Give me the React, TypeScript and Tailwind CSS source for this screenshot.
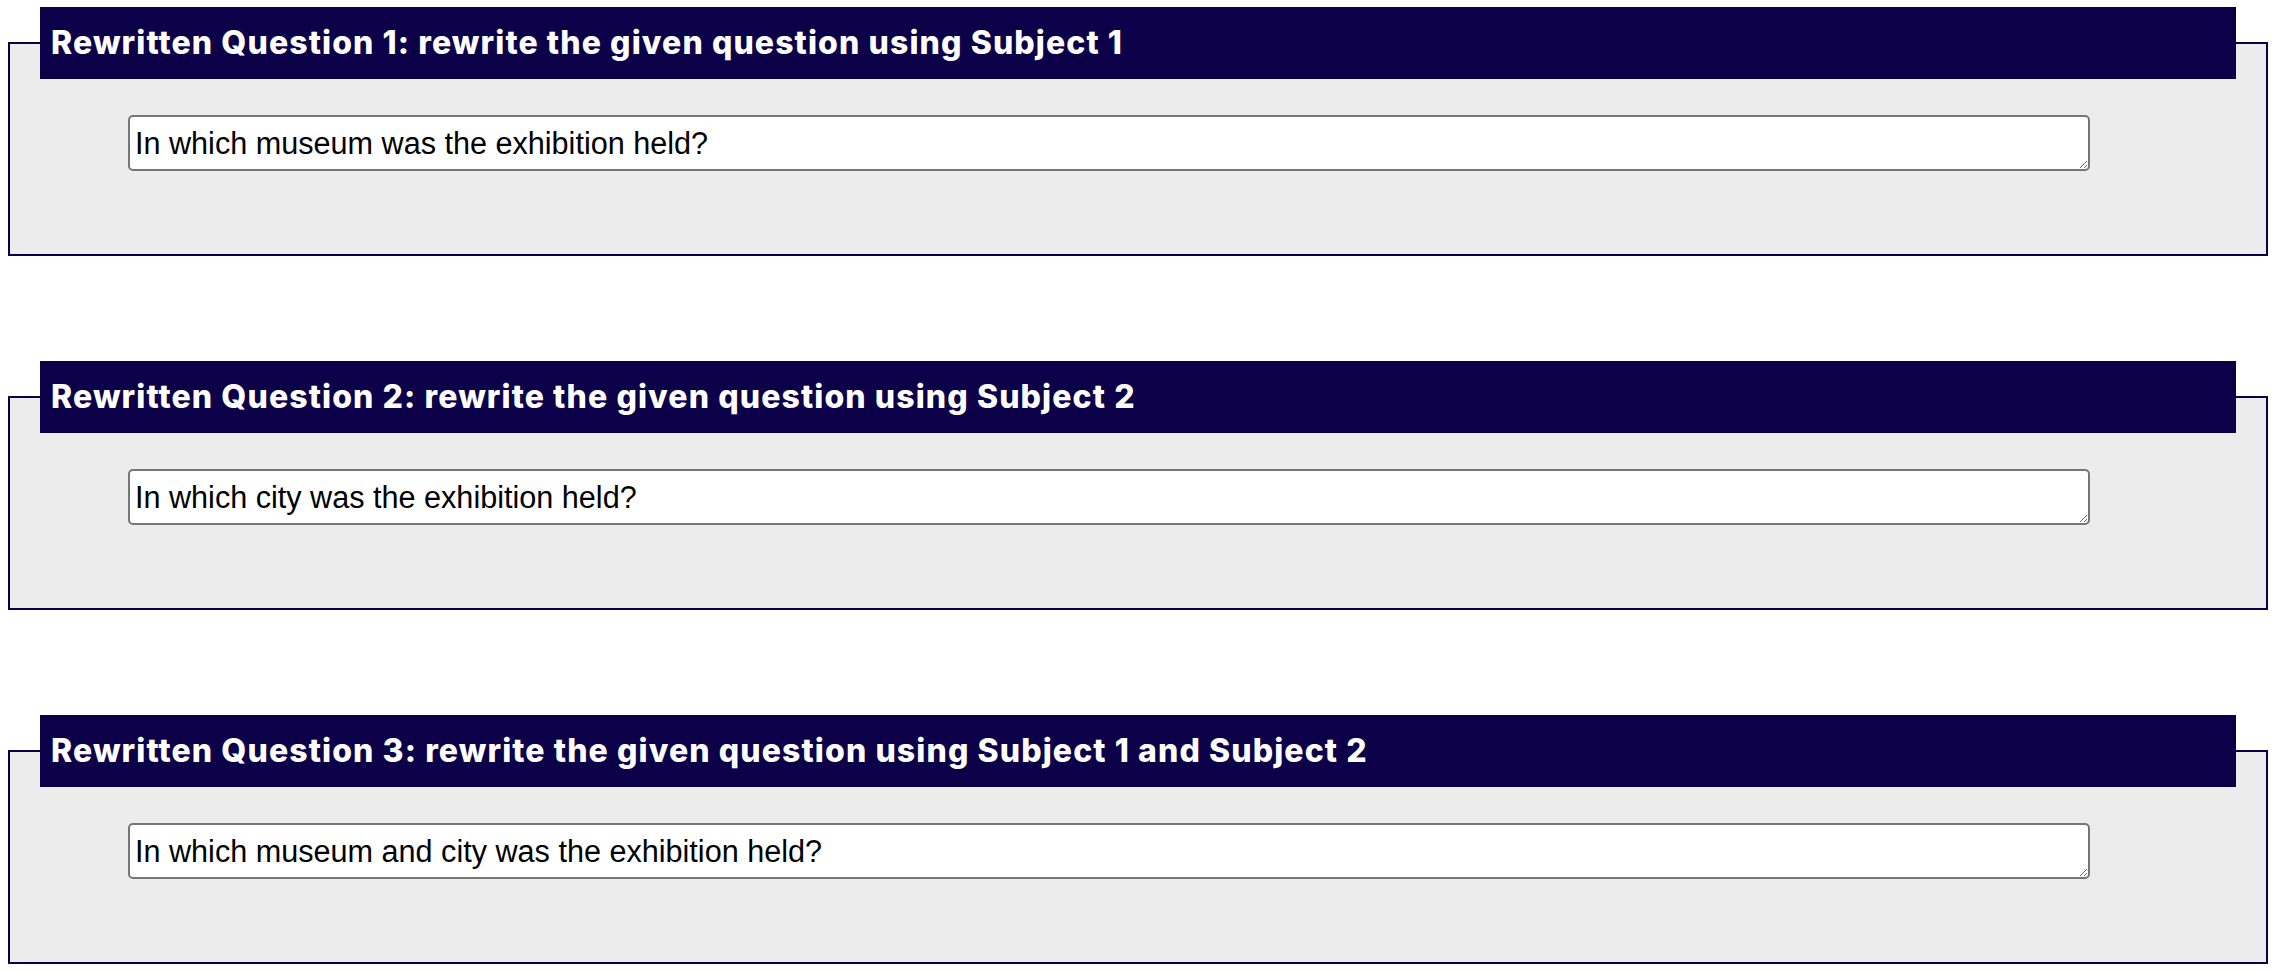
import React from "react";

const items = [
  {
    title: "Rewritten Question 1: rewrite the given question using Subject 1",
    value: "In which museum was the exhibition held?",
  },
  {
    title: "Rewritten Question 2: rewrite the given question using Subject 2",
    value: "In which city was the exhibition held?",
  },
  {
    title: "Rewritten Question 3: rewrite the given question using Subject 1 and Subject 2",
    value: "In which museum and city was the exhibition held?",
  },
];

export default function App() {
  return (
    <div className="min-h-screen bg-white pt-[7px] pl-[8px] flex flex-col gap-[105px]">
      {items.map((it, i) => (
        <fieldset
          key={i}
          className="w-[2260px] border-2 border-[#0c0048] bg-[#ececec] px-[30px] pt-[36px] pb-[83px]"
        >
          <legend
            className="w-[2196px] h-[72px] bg-[#0c0048] px-[11px] text-white text-[32px] font-extrabold tracking-[1.1px] leading-[72px] whitespace-nowrap"
            style={{ fontFamily: "Inter, 'Noto Sans', sans-serif" }}
          >
            {it.title}
          </legend>
          <textarea
            defaultValue={it.value}
            rows={1}
            className="block ml-[88px] w-[1962px] h-[56px] bg-white border-2 border-[#767676] rounded-[5px] pl-[5px] pr-[4px] pt-[8px] pb-[4px] text-[30.6px] leading-[36px] text-black overflow-hidden"
            style={{ fontFamily: "'Liberation Sans', Arial, sans-serif" }}
          />
        </fieldset>
      ))}
    </div>
  );
}
